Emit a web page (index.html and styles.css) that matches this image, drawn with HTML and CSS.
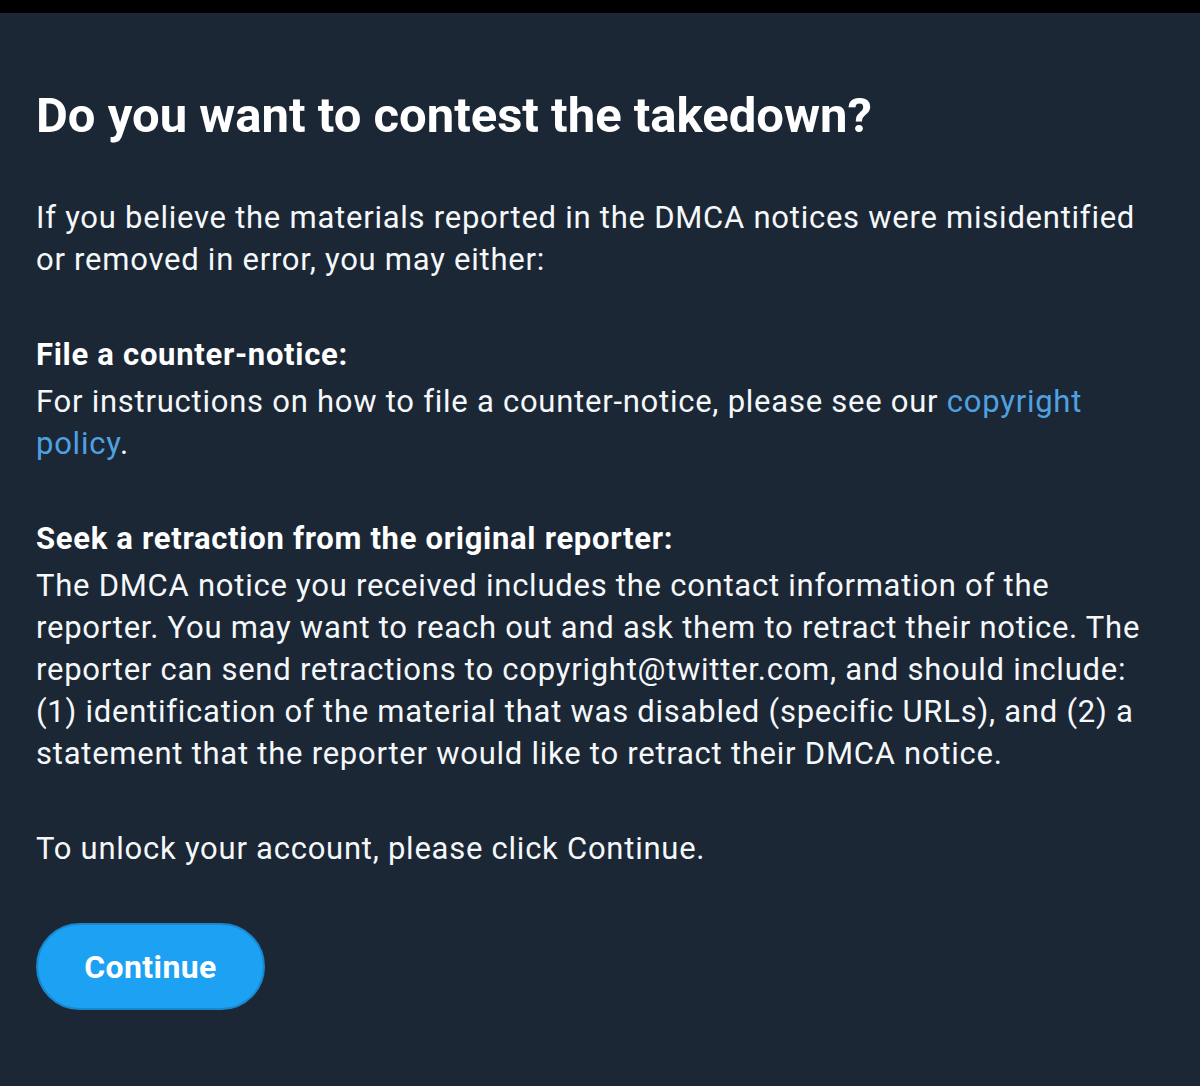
FILE: index.html
```html
<!DOCTYPE html>
<html lang="en">
<head>
<meta charset="utf-8">
<title>Do you want to contest the takedown?</title>
<link rel="stylesheet" href="styles.css">
</head>
<body>
<div class="statusbar"></div>
<main class="page">
  <h1 class="title">Do you want to contest the takedown?</h1>
  <p class="para">If you believe the materials reported in the DMCA notices were misidentified or removed in error, you may either:</p>
  <section class="option">
    <h2 class="label">File a counter-notice:</h2>
    <p class="text">For instructions on how to file a counter-notice, please see our <a class="link" href="#">copyright policy</a>.</p>
  </section>
  <section class="option">
    <h2 class="label">Seek a retraction from the original reporter:</h2>
    <p class="text">The DMCA notice you received includes the contact information of the reporter. You may want to reach out and ask them to retract their notice. The reporter can send retractions to copyright@twitter.com, and should include: (1) identification of the material that was disabled (specific URLs), and (2) a statement that the reporter would like to retract their DMCA notice.</p>
  </section>
  <p class="para">To unlock your account, please click Continue.</p>
  <div class="actions">
    <button class="btn" type="button">Continue</button>
  </div>
</main>
</body>
</html>
```
FILE: styles.css
```css
html, body {
  margin: 0;
  padding: 0;
  background: #1c2735;
}
body {
  font-family: Roboto, "Noto Sans", "Liberation Sans", sans-serif;
  color: #f5f8fa;
  height: 1086px;
  overflow: hidden;
}
.statusbar {
  height: 13px;
  background: #000;
}
.page {
  padding: 75px 45px 0 36px;
  display: flex;
  flex-direction: column;
  gap: 53px;
}
.title {
  margin: 0;
  font-size: 49px;
  line-height: 56px;
  font-weight: 700;
  color: #fff;
}
.para, .text {
  margin: 0;
  font-size: 31px;
  line-height: 42px;
  letter-spacing: 0.75px;
  font-weight: 400;
}
.option {
  display: flex;
  flex-direction: column;
  gap: 5px;
}
.label {
  margin: 0;
  font-size: 31px;
  line-height: 42px;
  letter-spacing: 0.7px;
  font-weight: 700;
  color: #fff;
}
.link {
  color: #4fa2e2;
  text-decoration: none;
}
.actions {
  display: flex;
}
.btn {
  width: 229px;
  height: 87px;
  border-radius: 44px;
  border: 2px solid #1787cf;
  background: #1da1f2;
  color: #fff;
  font-family: Roboto, "Noto Sans", "Liberation Sans", sans-serif;
  font-size: 32px;
  letter-spacing: 0.4px;
  font-weight: 700;
  padding: 0;
}
```
